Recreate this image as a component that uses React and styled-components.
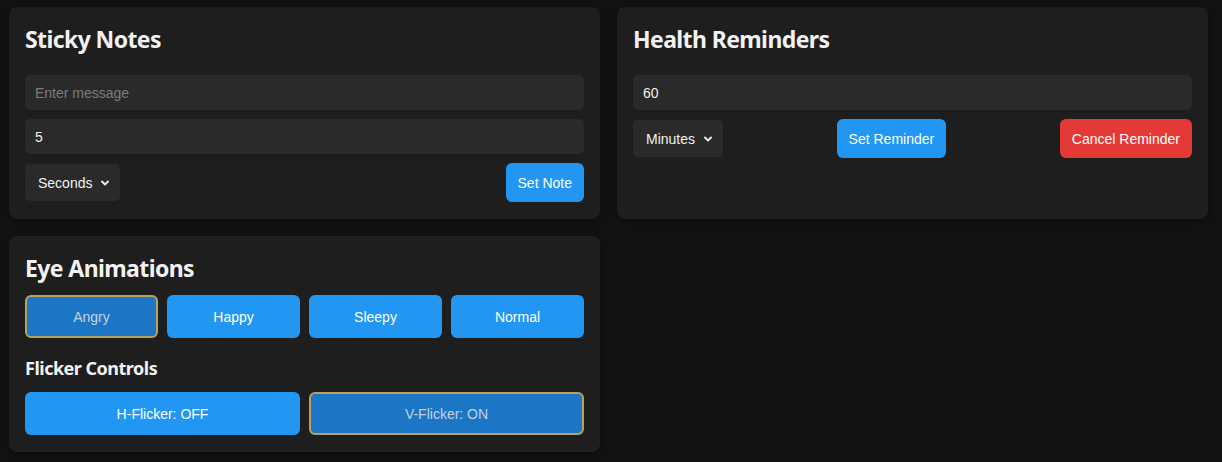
import styled, {createGlobalStyle} from "styled-components";
import {useState} from "react";
import {ChevronDown} from "lucide-react";

const GlobalStyle = createGlobalStyle`
  html, body {
    margin: 0;
    padding: 0;
    background: #121212;
    color: #f0f0f0;
  }
  * { box-sizing: border-box; }
`;

const Page = styled.main`
  display: grid;
  grid-template-columns: 1fr 1fr;
  align-items: start;
  gap: 17px 17px;
  padding: 7px 14px 10px 9px;
  min-height: 462px;
`;

const Card = styled.section`
  background: #1e1e1e;
  border-radius: 8px;
  padding: 16px;
  box-shadow: 0 2px 8px rgba(0, 0, 0, 0.35);
  align-self: stretch;
`;

const Title = styled.h2`
  margin: 0 0 ${p => p.$gap || 20}px;
  font-family: "Noto Sans", "Open Sans", sans-serif;
  font-weight: 700;
  font-size: 23px;
  line-height: 32px;
  color: #f2f2f2;
  letter-spacing: -0.6px;
`;

const SubTitle = styled.h3`
  margin: 17px 0 11px;
  font-family: "Noto Sans", "Open Sans", sans-serif;
  font-weight: 700;
  font-size: 18px;
  line-height: 26px;
  color: #f2f2f2;
  letter-spacing: -0.5px;
`;

const Stack = styled.div`
  display: flex;
  flex-direction: column;
  gap: 9px;
`;

const Input = styled.input`
  width: 100%;
  height: 35px;
  border: none;
  outline: none;
  border-radius: 5px;
  background: #2a2a2a;
  color: #f0f0f0;
  padding: 0 10px;
  font-family: "Liberation Sans", Arial, sans-serif;
  font-size: 14px;

  &::placeholder {
    color: #7c7c7c;
  }
`;

const Row = styled.div`
  display: flex;
  align-items: center;
  justify-content: space-between;
  margin-top: ${p => p.$top || 0}px;
`;

const SelectBox = styled.div`
  position: relative;
  width: ${p => p.$width}px;
  height: 37px;

  svg {
    position: absolute;
    right: 9px;
    top: 13px;
    color: #e8e8e8;
    pointer-events: none;
  }
`;

const Select = styled.select`
  appearance: none;
  width: 100%;
  height: 100%;
  border: none;
  outline: none;
  border-radius: 5px;
  background: #2a2a2a;
  color: #f0f0f0;
  padding: 0 0 0 13px;
  font-family: "Liberation Sans", Arial, sans-serif;
  font-size: 14px;
`;

const Button = styled.button`
  height: ${p => p.$height || 39}px;
  padding: 0 10px;
  border: 2px solid ${p => (p.$active ? "#b7a35d" : "transparent")};
  border-radius: 6px;
  background: ${p => (p.$danger ? "#e53935" : p.$active ? "#1b77c6" : "#2196f3")};
  color: ${p => (p.$active ? "#c3d3e4" : "#ffffff")};
  font-family: "Liberation Sans", Arial, sans-serif;
  font-size: 14px;
  cursor: pointer;
`;

const ButtonGrid = styled.div`
  display: grid;
  grid-template-columns: repeat(${p => p.$cols}, 1fr);
  gap: 9px;
`;

const moods = ["Angry", "Happy", "Sleepy", "Normal"];

export default function App() {
    const [mood, setMood] = useState("Angry");
    const [hFlicker, setHFlicker] = useState(false);
    const [vFlicker, setVFlicker] = useState(true);

    return (
        <>
            <GlobalStyle/>
            <Page>
                <Card>
                    <Title>Sticky Notes</Title>
                    <Stack>
                        <Input placeholder="Enter message"/>
                        <Input defaultValue="5"/>
                    </Stack>
                    <Row $top={9}>
                        <SelectBox $width={95}>
                            <Select defaultValue="seconds">
                                <option value="seconds">Seconds</option>
                                <option value="minutes">Minutes</option>
                                <option value="hours">Hours</option>
                            </Select>
                            <ChevronDown size={12} strokeWidth={4}/>
                        </SelectBox>
                        <Button>Set Note</Button>
                    </Row>
                </Card>

                <Card>
                    <Title>Health Reminders</Title>
                    <Input defaultValue="60"/>
                    <Row $top={9}>
                        <SelectBox $width={90}>
                            <Select defaultValue="minutes">
                                <option value="seconds">Seconds</option>
                                <option value="minutes">Minutes</option>
                                <option value="hours">Hours</option>
                            </Select>
                            <ChevronDown size={12} strokeWidth={4}/>
                        </SelectBox>
                        <Button>Set Reminder</Button>
                        <Button $danger>Cancel Reminder</Button>
                    </Row>
                </Card>

                <Card>
                    <Title $gap={11}>Eye Animations</Title>
                    <ButtonGrid $cols={4}>
                        {moods.map(m => (
                            <Button key={m} $height={43} $active={mood === m} onClick={() => setMood(m)}>{m}</Button>
                        ))}
                    </ButtonGrid>
                    <SubTitle>Flicker Controls</SubTitle>
                    <ButtonGrid $cols={2}>
                        <Button $height={43} $active={hFlicker} onClick={() => setHFlicker(v => !v)}>
                            H-Flicker: {hFlicker ? "ON" : "OFF"}
                        </Button>
                        <Button $height={43} $active={vFlicker} onClick={() => setVFlicker(v => !v)}>
                            V-Flicker: {vFlicker ? "ON" : "OFF"}
                        </Button>
                    </ButtonGrid>
                </Card>
            </Page>
        </>
    );
}
